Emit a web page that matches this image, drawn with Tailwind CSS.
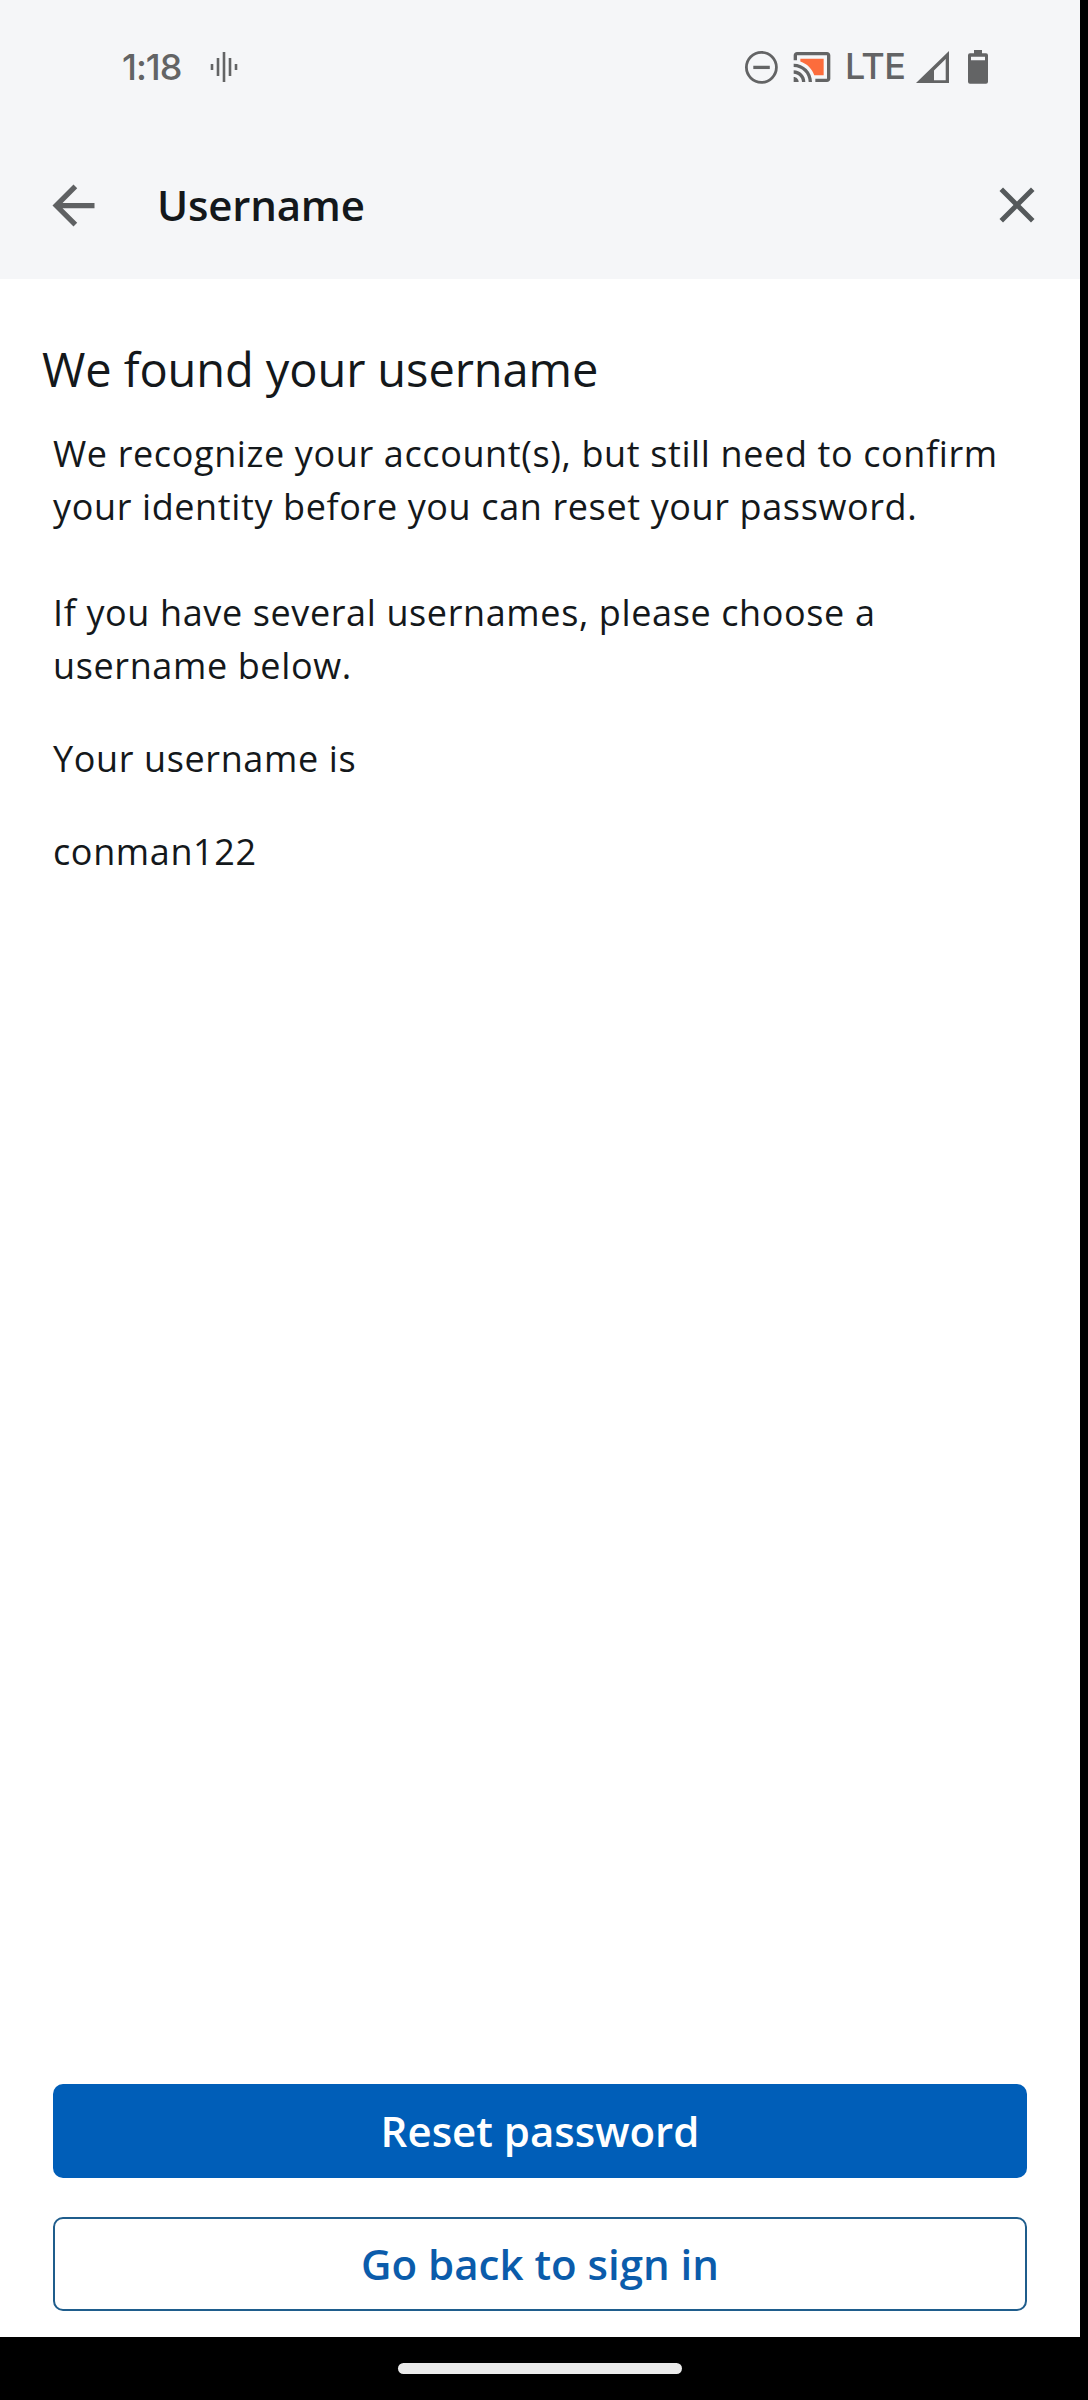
<!DOCTYPE html>
<html lang="en">
<head>
<meta charset="utf-8">
<title>Username</title>
<script src="https://cdn.jsdelivr.net/npm/@tailwindcss/browser@4"></script>
</head>
<body class="bg-black">
<div class="flex h-[2400px] w-[1080px] flex-col font-['Open_Sans',sans-serif] text-[#14181b]">
  <header class="h-[279px] shrink-0 bg-[#f5f6f8]">
    <!-- Status bar -->
    <div class="flex h-[134px] items-center pl-[122px] font-['Inter',sans-serif] text-[36px] font-medium text-[#636465]">
      <span class="w-[88px] tracking-[-1px] whitespace-nowrap">1:18</span>
      <svg class="h-[30px] w-7 shrink-0" viewBox="0 0 28 30" fill="currentColor">
        <rect x="0.7" y="12" width="2.6" height="6"/>
        <rect x="6.7" y="6" width="2.6" height="18"/>
        <rect x="12.7" y="0" width="2.6" height="30"/>
        <rect x="18.7" y="6" width="2.6" height="18"/>
        <rect x="24.7" y="12" width="2.6" height="6"/>
      </svg>
      <svg class="ml-[506px] h-[34px] w-[35px] shrink-0" viewBox="0 0 35 34" fill="none" stroke="currentColor">
        <circle cx="17.4" cy="17.3" r="15" stroke-width="2.8"/>
        <path d="M9.3 17.4h16.5" stroke-width="3.3"/>
      </svg>
      <svg class="ml-[13px] h-10 w-10 shrink-0" viewBox="0 0 24 24" fill="currentColor">
        <path fill="#fc6c3c" d="M19 7H5v1.63c3.96 1.28 7.09 4.41 8.37 8.37H19z"/>
        <path d="M1 18v3h3c0-1.66-1.34-3-3-3zm0-4v2c2.76 0 5 2.24 5 5h2c0-3.87-3.13-7-7-7zm0-4v2c4.97 0 9 4.03 9 9h2c0-6.08-4.93-11-11-11zm20-7H3c-1.1 0-2 .9-2 2v3h2V5h18v14h-7v2h7c1.1 0 2-.9 2-2V5c0-1.1-.9-2-2-2z"/>
      </svg>
      <span class="ml-[13px] w-[71px] pb-0.5 tracking-[-0.6px]">LTE</span>
      <svg class="h-8 w-[33px] shrink-0" viewBox="0 0 33 32" fill="currentColor">
        <path fill-rule="evenodd" d="M33 0v32H0zM29.7 8L18 19.5V29.3h11.7z"/>
      </svg>
      <svg class="ml-[19px] h-[34px] w-5 shrink-0" viewBox="0 0 20 34" fill="currentColor">
        <path fill-rule="evenodd" d="M6 0h8v3.2h4a2 2 0 0 1 2 2v26.5a2 2 0 0 1-2 2H2a2 2 0 0 1-2-2V5.200a2 2 0 0 1 2-2h4zM3 6.700v3.600h14V6.700z"/>
      </svg>
    </div>
    <!-- App bar -->
    <div class="flex h-[143px] items-center pl-[42px] pr-[33px]">
      <button aria-label="Back" class="shrink-0 text-[#5f6163]">
        <svg class="size-[63px]" viewBox="0 0 24 24" fill="currentColor"><path d="M20 11H7.830l5.590-5.590L12 4l-8 8 8 8 1.410-1.410L7.830 13H20z"/></svg>
      </button>
      <h1 class="ml-[52px] pb-0.5 text-[42px] leading-[58px] font-semibold tracking-[-0.2px]">Username</h1>
      <button aria-label="Close" class="mt-[-2px] ml-auto shrink-0 text-[#55595b]">
        <svg class="size-[60px]" viewBox="0 0 24 24" fill="currentColor"><path d="M19 6.410L17.590 5 12 10.590 6.410 5 5 6.410 10.590 12 5 17.590 6.410 19 12 13.410 17.590 19 19 17.590 13.410 12z"/></svg>
      </button>
    </div>
  </header>

  <main class="flex flex-1 flex-col bg-white pb-[26px]">
    <h2 class="mt-[58px] pl-[42px] text-[47px] leading-[64px] tracking-[-0.1px]">We found your username</h2>
    <div class="mt-[26px] flex flex-col gap-10 pl-[53px] text-[36px] leading-[53px] tracking-[0.62px]">
      <p>We recognize your account(s), but still need to confirm<br>your identity before you can reset your password.<br><br>If you have several usernames, please choose a<br>username below.</p>
      <p>Your username is</p>
      <p>conman122</p>
    </div>
    <div class="mt-auto flex flex-col gap-[39px] px-[53px] text-[42px] font-semibold">
      <button class="h-[94px] rounded-[10px] bg-[#005eb8] pb-0.5 text-white">Reset password</button>
      <button class="h-[94px] rounded-[10px] border-2 border-[#1f5d8c] pb-0.5 text-[#0b5cab]">Go back to sign in</button>
    </div>
  </main>

  <!-- Gesture navigation bar -->
  <footer class="flex h-[63px] shrink-0 justify-center bg-black pt-[26px]">
    <div class="h-[11px] w-[284px] rounded-full bg-[#ebebeb]"></div>
  </footer>
</div>
</body>
</html>
